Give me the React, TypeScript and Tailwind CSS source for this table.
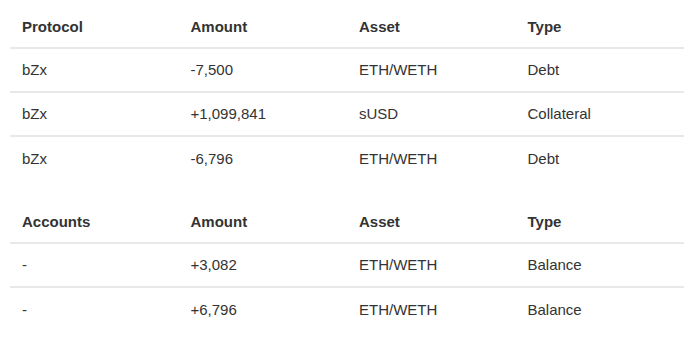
import React from "react";

type Row = [string, string, string, string];

function Table({ head, rows }: { head: Row; rows: Row[] }) {
  return (
    <div className="flex flex-col">
      <div className="grid grid-cols-4 h-[45px] pt-1 items-center border-b-2 border-[#e8e8e8] font-bold">
        {head.map((h, i) => (
          <div key={i} className="px-3">{h}</div>
        ))}
      </div>
      {rows.map((r, ri) => (
        <div
          key={ri}
          className={
            ri < rows.length - 1
              ? "grid grid-cols-4 h-[44px] items-center border-b-2 border-[#e8e8e8]"
              : "grid grid-cols-4 h-[44px] items-center"
          }
        >
          {r.map((c, i) => (
            <div key={i} className="px-3">{c}</div>
          ))}
        </div>
      ))}
    </div>
  );
}

export default function App() {
  return (
    <div
      className="w-[700px] h-[340px] bg-white text-[#333333] text-[15px] pl-[10px] pt-[4px] pr-[16px] flex flex-col gap-[18px]"
      style={{ fontFamily: '"Liberation Sans", Arial, sans-serif' }}
    >
      <Table
        head={["Protocol", "Amount", "Asset", "Type"]}
        rows={[
          ["bZx", "-7,500", "ETH/WETH", "Debt"],
          ["bZx", "+1,099,841", "sUSD", "Collateral"],
          ["bZx", "-6,796", "ETH/WETH", "Debt"],
        ]}
      />
      <Table
        head={["Accounts", "Amount", "Asset", "Type"]}
        rows={[
          ["-", "+3,082", "ETH/WETH", "Balance"],
          ["-", "+6,796", "ETH/WETH", "Balance"],
        ]}
      />
    </div>
  );
}
